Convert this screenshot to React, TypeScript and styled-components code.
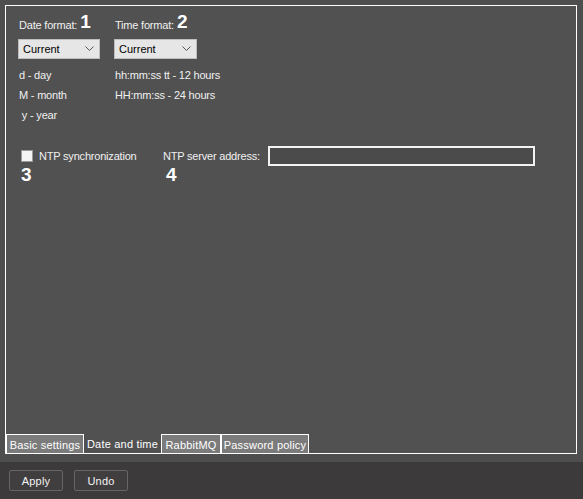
import React from "react";
import styled, { createGlobalStyle } from "styled-components";

const Global = createGlobalStyle`
  html, body { margin: 0; padding: 0; background: #4e4e4e; }
  body { font-family: "Liberation Sans", Arial, sans-serif; font-size: 11px; color: #f0f0f0; }
`;

const Page = styled.div`
  width: 583px;
  height: 499px;
  display: flex;
  flex-direction: column;
  background: #4e4e4e;
`;

const Top = styled.div`
  height: 462px;
  padding: 5px 6px 0 5px;
  box-sizing: border-box;
  display: flex;
  flex-direction: column;
`;

const Frame = styled.div`
  height: 449px;
  box-sizing: border-box;
  border: 1px solid #ffffff;
  background: #515151;
  display: flex;
  flex-direction: column;
`;

const Content = styled.div`
  flex: 1;
  padding: 8px 0 0 12px;
  display: flex;
  flex-direction: column;
`;

const Columns = styled.div`
  display: flex;
`;

const Column = styled.div<{ $w: number }>`
  width: ${(p) => p.$w}px;
  display: flex;
  flex-direction: column;
`;

const LabelRow = styled.div`
  display: flex;
  align-items: flex-end;
  height: 18px;
  padding-left: 1px;
`;

const Num = styled.span`
  font-family: "Liberation Sans", Arial, sans-serif;
  font-weight: 700;
  font-size: 19px;
  line-height: 18px;
  color: #ffffff;
  margin-left: 3px;
  position: relative;
  top: -1px;
`;

const Label = styled.span`
  line-height: 14px;
  letter-spacing: -0.2px;
`;

const Select = styled.div<{ $w: number }>`
  margin-top: 7px;
  width: ${(p) => p.$w}px;
  height: 20px;
  box-sizing: border-box;
  background: #e6e6e6;
  border: 1px solid #bdbdbd;
  color: #000;
  display: flex;
  align-items: center;
  justify-content: space-between;
  padding: 0 5px 0 4px;
  font-size: 11px;
`;

const Hint = styled.div`
  height: 20px;
  display: flex;
  align-items: center;
  padding-left: 1px;
  letter-spacing: -0.2px;
`;

const Hints = styled.div`
  margin-top: 6px;
  display: flex;
  flex-direction: column;
`;

const NtpRow = styled.div`
  display: flex;
  margin-top: 21px;
`;

const NtpCol = styled.div<{ $w: number }>`
  width: ${(p) => p.$w}px;
  display: flex;
  flex-direction: column;
`;

const CheckLine = styled.div`
  display: flex;
  align-items: center;
  height: 20px;
  padding-left: 3px;
  gap: 6px;
  letter-spacing: -0.2px;
`;

const Box = styled.div`
  width: 12px;
  height: 12px;
  box-sizing: border-box;
  background: #f4f4f4;
  border: 1px solid #9a9a9a;
`;

const BigNum = styled.div`
  font-family: "Liberation Sans", Arial, sans-serif;
  font-weight: 700;
  font-size: 19px;
  line-height: 18px;
  color: #ffffff;
  padding-left: 3px;
  margin-top: 0px;
`;

const AddrLine = styled.div`
  display: flex;
  align-items: center;
  height: 20px;
  gap: 8px;
  letter-spacing: -0.2px;
`;

const Input = styled.div`
  width: 267px;
  height: 20px;
  box-sizing: border-box;
  border: 2px solid #f2f2f2;
  background: #4b4b4b;
`;

const Tabs = styled.div`
  display: flex;
  height: 19px;
`;

const Tab = styled.div<{ $active?: boolean; $w: number }>`
  width: ${(p) => p.$w}px;
  box-sizing: border-box;
  display: flex;
  align-items: center;
  justify-content: center;
  white-space: nowrap;
  font-size: 11px;
  letter-spacing: 0.2px;
  color: #fff;
  background: ${(p) => (p.$active ? "#515151" : "#7b7b7b")};
  border: ${(p) => (p.$active ? "none" : "1px solid #ffffff")};
  border-bottom: none;
  padding-top: ${(p) => (p.$active ? "0" : "1px")};
`;

const Bottom = styled.div`
  flex: 1;
  background: #3c3a3b;
  display: flex;
  align-items: center;
  gap: 11px;
  padding: 0 0 0 9px;
`;

const Button = styled.div`
  width: 54px;
  height: 21px;
  box-sizing: border-box;
  border: 1px solid #666;
  border-radius: 2px;
  background: #403e3f;
  display: flex;
  align-items: center;
  justify-content: center;
  color: #f4f4f4;
  font-size: 11px;
  letter-spacing: 0.2px;
`;

const Chevron = () => (
  <svg width="9" height="6" viewBox="0 0 9 6">
    <path d="M0.5 0.5 L4.5 4.5 L8.5 0.5" fill="none" stroke="#555" strokeWidth="1" />
  </svg>
);

export default function App() {
  return (
    <Page>
      <Global />
      <Top>
        <Frame>
          <Content>
            <Columns>
              <Column $w={96}>
                <LabelRow>
                  <Label>Date format:</Label>
                  <Num>1</Num>
                </LabelRow>
                <Select $w={82}>
                  <span>Current</span>
                  <Chevron />
                </Select>
                <Hints>
                  <Hint>d - day</Hint>
                  <Hint>M - month</Hint>
                  <Hint>&nbsp;y - year</Hint>
                </Hints>
              </Column>
              <Column $w={180}>
                <LabelRow>
                  <Label>Time format:</Label>
                  <Num>2</Num>
                </LabelRow>
                <Select $w={83}>
                  <span>Current</span>
                  <Chevron />
                </Select>
                <Hints>
                  <Hint>hh:mm:ss tt - 12 hours</Hint>
                  <Hint>HH:mm:ss - 24 hours</Hint>
                </Hints>
              </Column>
            </Columns>
            <NtpRow>
              <NtpCol $w={145}>
                <CheckLine>
                  <Box />
                  <span>NTP synchronization</span>
                </CheckLine>
                <BigNum>3</BigNum>
              </NtpCol>
              <NtpCol $w={380}>
                <AddrLine>
                  <span>NTP server address:</span>
                  <Input />
                </AddrLine>
                <BigNum>4</BigNum>
              </NtpCol>
            </NtpRow>
          </Content>
          <Tabs>
            <Tab $w={78}>Basic settings</Tab>
            <Tab $w={77} $active>Date and time</Tab>
            <Tab $w={60}>RabbitMQ</Tab>
            <Tab $w={88}>Password policy</Tab>
          </Tabs>
        </Frame>
      </Top>
      <Bottom>
        <Button>Apply</Button>
        <Button>Undo</Button>
      </Bottom>
    </Page>
  );
}
